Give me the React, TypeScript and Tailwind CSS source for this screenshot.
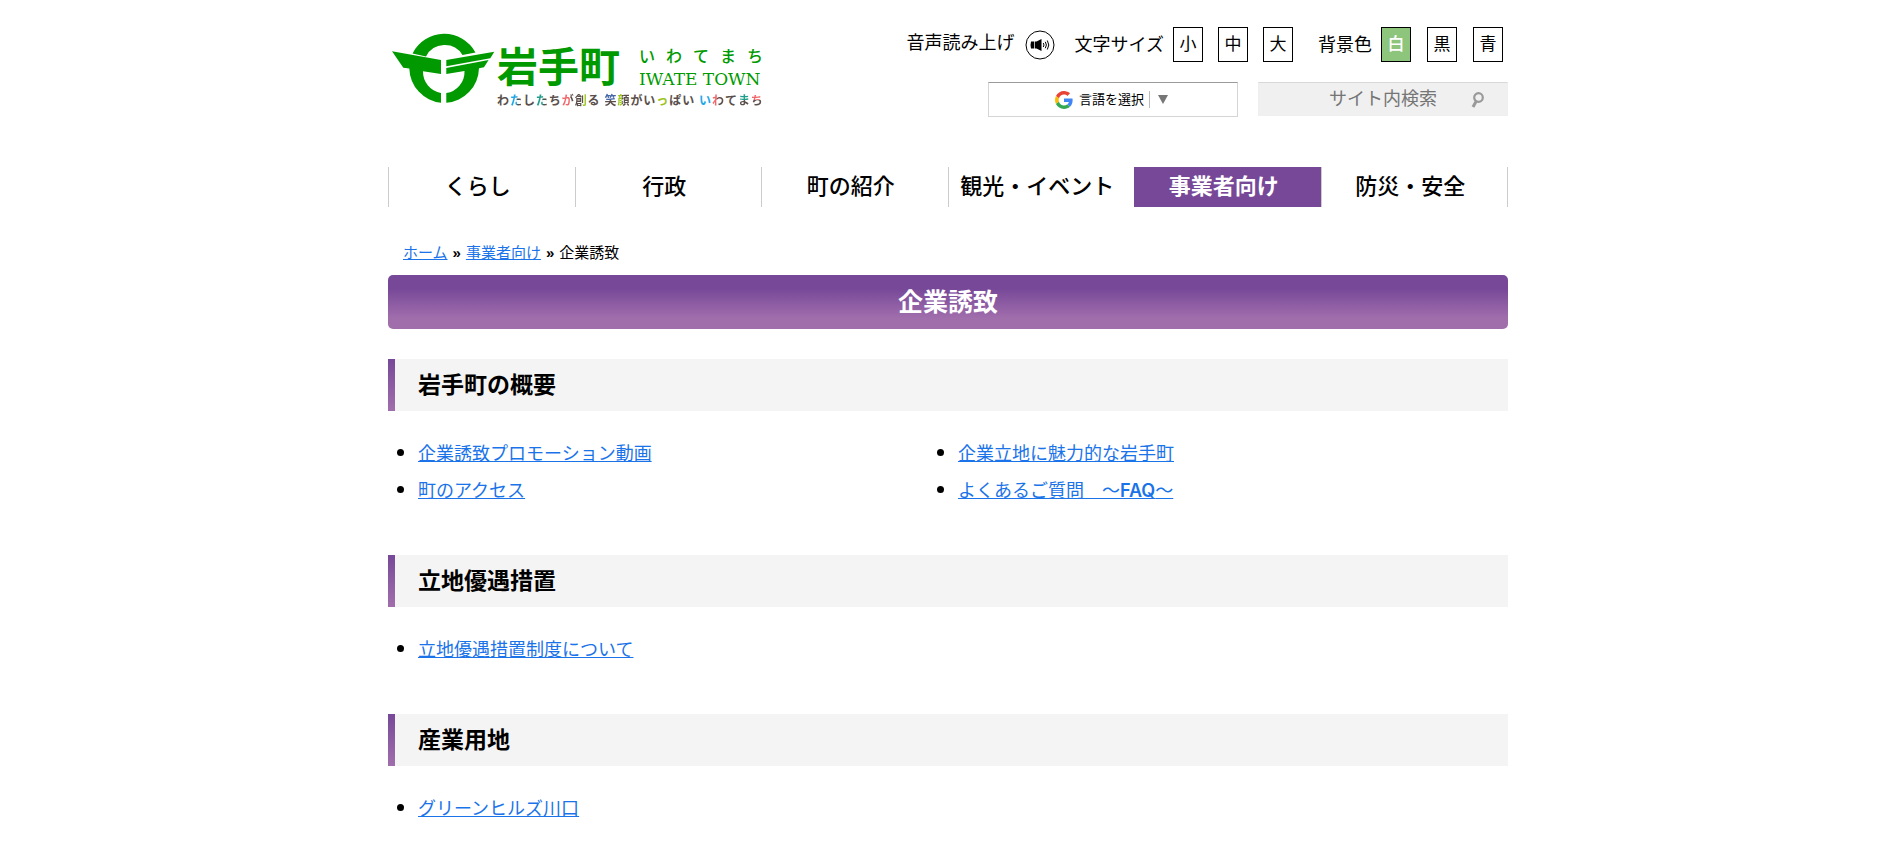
import type { ReactNode } from "react";

// ─── Data ───────────────────────────────────────────────────────────────────
const NAV = ["くらし", "行政", "町の紹介", "観光・イベント", "事業者向け", "防災・安全"];
const ACTIVE_NAV = "事業者向け";

const SECTIONS: { title: string; links: ReactNode[] }[] = [
  {
    title: "岩手町の概要",
    links: [
      "企業誘致プロモーション動画",
      "企業立地に魅力的な岩手町",
      "町のアクセス",
      <>よくあるご質問　～<b className="font-['Inter',sans-serif] font-semibold">FAQ</b>～</>,
    ],
  },
  { title: "立地優遇措置", links: ["立地優遇措置制度について"] },
  { title: "産業用地", links: ["グリーンヒルズ川口"] },
];

// Each character is plain gray or split into an accent half and a gray half
const TAGLINE: [string, string][] = [
  ["わ", "text-[#5a4f4a]"],
  ["た", "bg-linear-to-r from-[#1ea7e8] from-55% to-[#5a4f4a] to-55% bg-clip-text text-transparent"],
  ["し", "text-[#5a4f4a]"],
  ["た", "bg-linear-to-r from-[#1f9c8a] from-55% to-[#5a4f4a] to-55% bg-clip-text text-transparent"],
  ["ち", "text-[#5a4f4a]"],
  ["が", "bg-linear-to-r from-[#f0686b] from-65% to-[#5a4f4a] to-65% bg-clip-text text-transparent"],
  ["創", "bg-linear-to-r from-[#5a4f4a] from-65% to-[#9cc41c] to-65% bg-clip-text text-transparent"],
  ["る", "text-[#5a4f4a]"],
  ["笑", "ml-1 bg-linear-to-b from-[#4668a8] from-45% to-[#5a4f4a] to-45% bg-clip-text text-transparent"],
  ["顔", "bg-linear-to-r from-[#9cc41c] from-45% to-[#5a4f4a] to-45% bg-clip-text text-transparent"],
  ["が", "text-[#5a4f4a]"],
  ["い", "text-[#5a4f4a]"],
  ["っ", "text-[#9cc41c]"],
  ["ぱ", "text-[#5a4f4a]"],
  ["い", "text-[#5a4f4a]"],
  ["い", "ml-1 text-[#1ea7e8]"],
  ["わ", "bg-linear-to-r from-[#f0686b] from-45% to-[#5a4f4a] to-45% bg-clip-text text-transparent"],
  ["て", "text-[#5a4f4a]"],
  ["ま", "bg-linear-to-b from-[#1f9c8a] from-45% to-[#5a4f4a] to-45% bg-clip-text text-transparent"],
  ["ち", "bg-linear-to-b from-[#f0686b] from-45% to-[#5a4f4a] to-45% bg-clip-text text-transparent"],
];

// ─── Logo ───────────────────────────────────────────────────────────────────
const Emblem = () => (
  <svg viewBox="0 0 104 74" className="h-[74px] w-[104px] shrink-0" fill="#009a00" aria-hidden="true">
    <path d="M21.500 22.500A35.500 35.500 0 0 1 84.500 21.500L71.500 24A21 21 0 0 0 35 25.500Z" />
    <path d="M1 20.300L50 29V43L32 40.300A21.500 21.500 0 0 0 50 62V71.800A35.500 35.500 0 0 1 18.300 37.500L12.300 36.700Z" />
    <path d="M55.300 29L103.300 20.800L99.300 27.300L55.300 35.300Z" />
    <path d="M55.300 37L97.600 29L93 36.300L88 37.200A35.500 35.500 0 0 1 55.300 71.800V62A21.500 21.500 0 0 0 73.500 39.900L55.300 42.900Z" />
  </svg>
);

const Logo = () => (
  <a href="#" aria-label="岩手町" className="flex items-start gap-0.5 pt-[31px] pl-[3px] text-[#009a00]">
    <Emblem />
    <span className="block w-[266px] pt-[13px]">
      <span className="flex items-center justify-between">
        <span className="text-[41px] leading-[48px] font-bold">岩手町</span>
        <span className="w-[124px]">
          <span className="flex justify-between text-[16px] leading-[22px] font-medium">
            {[..."いわてまち"].map((c) => (
              <span key={c}>{c}</span>
            ))}
          </span>
          <span className="block font-['DejaVu_Serif',serif] text-[17px] leading-[22px] whitespace-nowrap">IWATE TOWN</span>
        </span>
      </span>
      <span className="flex justify-between text-[12px] leading-[18px] font-bold">
        {TAGLINE.map(([c, color], i) => (
          <span key={i} className={color}>{c}</span>
        ))}
      </span>
    </span>
  </a>
);

// ─── Header tools ───────────────────────────────────────────────────────────
const BoxButton = ({ label, active = false }: { label: string; active?: boolean }) => (
  <button
    type="button"
    className={`h-[35px] w-[30px] border border-black text-[17px] leading-[33px] ${active ? "bg-[#8cc57b] font-medium text-white" : "bg-white"}`}
  >
    {label}
  </button>
);

const GoogleMark = () => (
  <svg viewBox="0 0 48 48" className="size-[18px]" aria-hidden="true">
    <path fill="#EA4335" d="M24 9.5c3.54 0 6.71 1.22 9.21 3.6l6.85-6.85C35.9 2.38 30.47 0 24 0 14.62 0 6.51 5.38 2.56 13.22l7.98 6.19C12.43 13.72 17.74 9.5 24 9.5z" />
    <path fill="#4285F4" d="M46.98 24.55c0-1.57-.15-3.09-.38-4.55H24v9.02h12.94c-.58 2.96-2.26 5.48-4.78 7.18l7.73 6c4.51-4.18 7.09-10.36 7.09-17.65z" />
    <path fill="#FBBC05" d="M10.53 28.59c-.48-1.45-.76-2.99-.76-4.59s.27-3.14.76-4.59l-7.98-6.19C.92 16.46 0 20.12 0 24c0 3.88.92 7.54 2.56 10.78l7.97-6.19z" />
    <path fill="#34A853" d="M24 48c6.48 0 11.93-2.13 15.89-5.81l-7.73-6c-2.15 1.45-4.92 2.3-8.16 2.3-6.26 0-11.57-4.22-13.47-9.91l-7.98 6.19C6.51 42.62 14.62 48 24 48z" />
  </svg>
);

const SpeakerIcon = () => (
  <svg viewBox="0 0 30 30" className="size-[30px]" aria-hidden="true">
    <circle cx="15" cy="15" r="14" fill="none" stroke="#000" strokeWidth="1" />
    <path d="M6 11.500h3.300v7H6q-1-3.500 0-7zM10 11.500h1.500l5-2.500v12l-5-2.500h-1.500z" />
    <path d="M18.300 13q1.400 2 0 4M20.300 11.800q2.200 3.200 0 6.400M22.300 10.500q3 4.500 0 9" fill="none" stroke="#000" strokeWidth="1" />
  </svg>
);

const Tools = () => (
  <div className="flex flex-col items-end pt-[27px]">
    <div className="flex items-center pr-[5px] text-[18px] leading-[28px]">
      <a href="#" className="mr-5 flex items-center gap-[10px]">
        <span className="pb-1">音声読み上げ</span>
        <SpeakerIcon />
      </a>
      <span>文字サイズ</span>
      <div className="mr-[25px] ml-[9px] flex gap-[15px]">
        <BoxButton label="小" />
        <BoxButton label="中" />
        <BoxButton label="大" />
      </div>
      <span>背景色</span>
      <div className="ml-[9px] flex gap-4">
        <BoxButton label="白" active />
        <BoxButton label="黒" />
        <BoxButton label="青" />
      </div>
    </div>
    <div className="mt-5 flex items-start gap-5">
      <button
        type="button"
        className="flex h-[35px] w-[250px] items-center justify-center border border-[#d5d5d5] border-t-[#9b9b9b] bg-white pr-[3px] text-[13px]"
      >
        <GoogleMark />
        <span className="ml-[6px] border-r border-[#bbb] pr-[5px] leading-[17px]">言語を選択</span>
        <svg viewBox="0 0 10 9" className="ml-2 h-[9px] w-[10px]" fill="#767676" aria-hidden="true">
          <path d="M0 0h10L5 9z" />
        </svg>
      </button>
      <form className="relative w-[250px]">
        <input
          type="text"
          aria-label="サイト内検索"
          placeholder="サイト内検索"
          className="h-[34px] w-full border border-[#efefef] border-t-[#d8d8d8] bg-[#f0f0f0] text-center text-[18px] placeholder:text-[#757575]"
        />
        <button type="submit" aria-label="検索" className="absolute top-[10px] right-6">
          <svg viewBox="0 0 13 16" className="h-4 w-[13px]" fill="none" stroke="#999" strokeWidth="2.2" aria-hidden="true">
            <circle cx="7.500" cy="5.500" r="4.300" />
            <path d="M5.200 9.300L2 15" strokeWidth="3" />
          </svg>
        </button>
      </form>
    </div>
  </div>
);

// ─── Section ────────────────────────────────────────────────────────────────
const Section = ({ title, links }: { title: string; links: ReactNode[] }) => (
  <section>
    <div className="flex bg-[#f4f4f4]">
      <span className="w-[7px] bg-linear-to-b from-[#774898] to-[#a16eac]" />
      <h2 className="py-2 pl-[23px] text-[23px] leading-[36px] font-bold">{title}</h2>
    </div>
    <ul className="mt-6 mb-[46px] grid list-disc grid-cols-2 pl-[30px] text-[18px] leading-[35px]">
      {links.map((link, i) => (
        <li key={i} className={`marker:font-['Noto_Sans_CJK_JP'] ${i % 2 ? "ml-[-5px]" : ""}`}>
          <a href="#" className="text-[#1a73e8] underline">{link}</a>
        </li>
      ))}
    </ul>
  </section>
);

// ─── Page ───────────────────────────────────────────────────────────────────
export default function App() {
  return (
    <div className="min-h-screen bg-white pr-0.5 font-['Liberation_Sans','Noto_Sans_CJK_JP',sans-serif] text-black">
      <div className="mx-auto max-w-[1120px]">
        <header className="flex items-start justify-between">
          <Logo />
          <Tools />
        </header>

        <nav className="mt-[50px] grid grid-cols-6 border-r border-[#ccc]">
          {NAV.map((item) => (
            <a
              key={item}
              href="#"
              className={`border-l pr-2 text-center text-[22px] leading-[40px] whitespace-nowrap ${item === ACTIVE_NAV ? "border-[#774898] bg-[#774898] font-bold text-white" : "border-[#ccc] font-medium"}`}
            >
              {item}
            </a>
          ))}
        </nav>

        <main>
          <nav aria-label="パンくず" className="flex gap-[5px] pt-[34px] pl-[15px] text-[15px] leading-6">
            <a href="#" className="text-[#1a73e8] underline">ホーム</a>
            <span className="font-bold">»</span>
            <a href="#" className="text-[#1a73e8] underline">事業者向け</a>
            <span className="font-bold">»</span>
            <span>企業誘致</span>
          </nav>
          <h1 className="mt-[10px] mb-[30px] rounded-[5px] bg-linear-to-b from-[#774898] from-25% to-[#a16eac] to-80% text-center text-[25px] leading-[54px] font-bold text-white">
            企業誘致
          </h1>
          {SECTIONS.map((s) => (
            <Section key={s.title} {...s} />
          ))}
        </main>
      </div>
    </div>
  );
}
